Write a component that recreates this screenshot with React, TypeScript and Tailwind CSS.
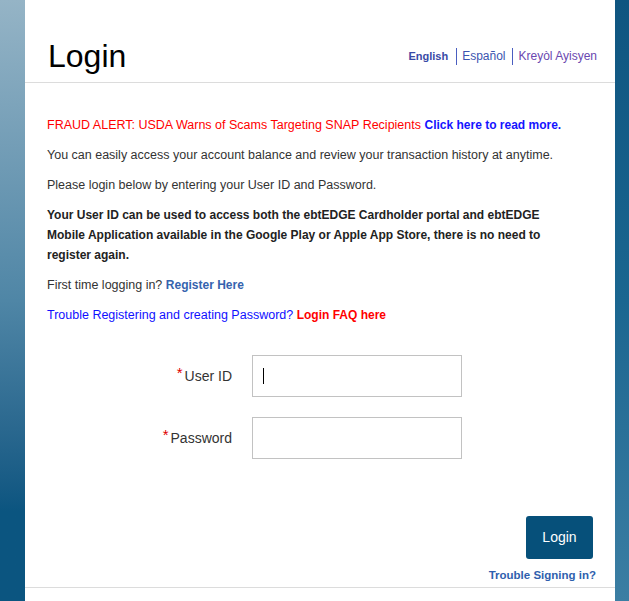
import { useEffect, useRef } from "react"

export default function App() {
    const userRef = useRef<HTMLInputElement>(null)

    useEffect(() => {
        userRef.current?.focus()
    }, [])

    return (
        <div className="flex min-h-[601px] font-['Liberation_Sans',Arial,sans-serif] text-[#333]">
            {/* Left backdrop strip */}
            <div className="w-[25px] shrink-0 bg-gradient-to-b from-[#95b4c6] via-[#4f86a6] via-50% to-[#0b5580] to-85%" />

            {/* Main panel */}
            <div className="w-[590px] shrink-0 mt-px bg-white flex flex-col">
                {/* Header */}
                <div className="h-[82px] border-b border-[#dcdcdc] flex items-center justify-between pt-[29px] pl-[23px] pr-[18px]">
                    <h1 className="text-[32px] leading-[35px] text-black font-normal">Login</h1>
                    <div className="flex items-center text-[12px] leading-[17px]">
                        <a className="font-bold text-[11px] text-[#3a4aa6] pr-[8px] border-r border-[#4a5ec0]">English</a>
                        <a className="text-[#3b55b0] pl-[5px] pr-[6px] border-r border-[#4a5ec0]">Español</a>
                        <a className="text-[#6a48b0] pl-[6px]">Kreyòl Ayisyen</a>
                    </div>
                </div>

                {/* Body copy */}
                <div className="pt-[32px] pl-[22px] pr-[22px] text-[12.5px] leading-[20px]">
                    <p className="mb-[10px] text-[#ff0000]">
                        FRAUD ALERT: USDA Warns of Scams Targeting SNAP Recipients{" "}
                        <a className="font-bold text-[12px] text-[#1414ff]">Click here to read more.</a>
                    </p>
                    <p className="mb-[10px]">
                        You can easily access your account balance and review your transaction history at anytime.
                    </p>
                    <p className="mb-[10px]">Please login below by entering your User ID and Password.</p>
                    <p className="mb-[10px] max-w-[500px] font-bold text-[12px] text-[#222]">
                        Your User ID can be used to access both the ebtEDGE Cardholder portal and ebtEDGE Mobile
                        Application available in the Google Play or Apple App Store, there is no need to register again.
                    </p>
                    <p className="mb-[10px]">
                        First time logging in?{" "}
                        <a className="font-bold text-[12px] text-[#3563ae]">Register Here</a>
                    </p>
                    <p className="mb-[10px] text-[#1010ff]">
                        Trouble Registering and creating Password?{" "}
                        <a className="font-bold text-[12px] text-[#ff0000]">Login FAQ here</a>
                    </p>
                </div>

                {/* Form */}
                <div className="mt-[20px] pl-[22px] flex flex-col gap-[20px] text-[14px]">
                    <div className="flex items-center gap-[20px]">
                        <label className="w-[185px] text-right">
                            <span className="align-[3px] text-[#e00000] text-[15px] leading-none mr-[2px]">*</span>User ID
                        </label>
                        <div className="relative">
                            <input
                                ref={userRef}
                                type="text"
                                className="block w-[210px] h-[42px] border border-[#c2c2c2] px-[10px] outline-none bg-white caret-black"
                            />
                            {/* caret shown in the capture */}
                            <span className="absolute left-[11px] top-[13px] w-px h-[16px] bg-black pointer-events-none" />
                        </div>
                    </div>
                    <div className="flex items-center gap-[20px]">
                        <label className="w-[185px] text-right">
                            <span className="align-[3px] text-[#e00000] text-[15px] leading-none mr-[2px]">*</span>Password
                        </label>
                        <input
                            type="password"
                            className="block w-[210px] h-[42px] border border-[#c2c2c2] px-[10px] outline-none bg-white"
                        />
                    </div>
                </div>

                {/* Actions */}
                <div className="mt-[57px] flex flex-col items-end pr-[19px]">
                    <button className="mr-[3px] w-[67px] h-[43px] rounded-[3px] bg-[#06507a] text-white text-[14px]">
                        Login
                    </button>
                    <a className="mt-[8px] text-[11.5px] leading-[16px] font-bold text-[#2f5fae]">Trouble Signing in?</a>
                </div>

                <div className="mt-[4px] border-b border-[#dcdcdc]" />
                <div className="flex-1" />
            </div>

            {/* Right backdrop strip */}
            <div className="flex-1 bg-gradient-to-b from-[#0f5580] via-[#1a6690] to-[#3b7ea3]" />
        </div>
    )
}
